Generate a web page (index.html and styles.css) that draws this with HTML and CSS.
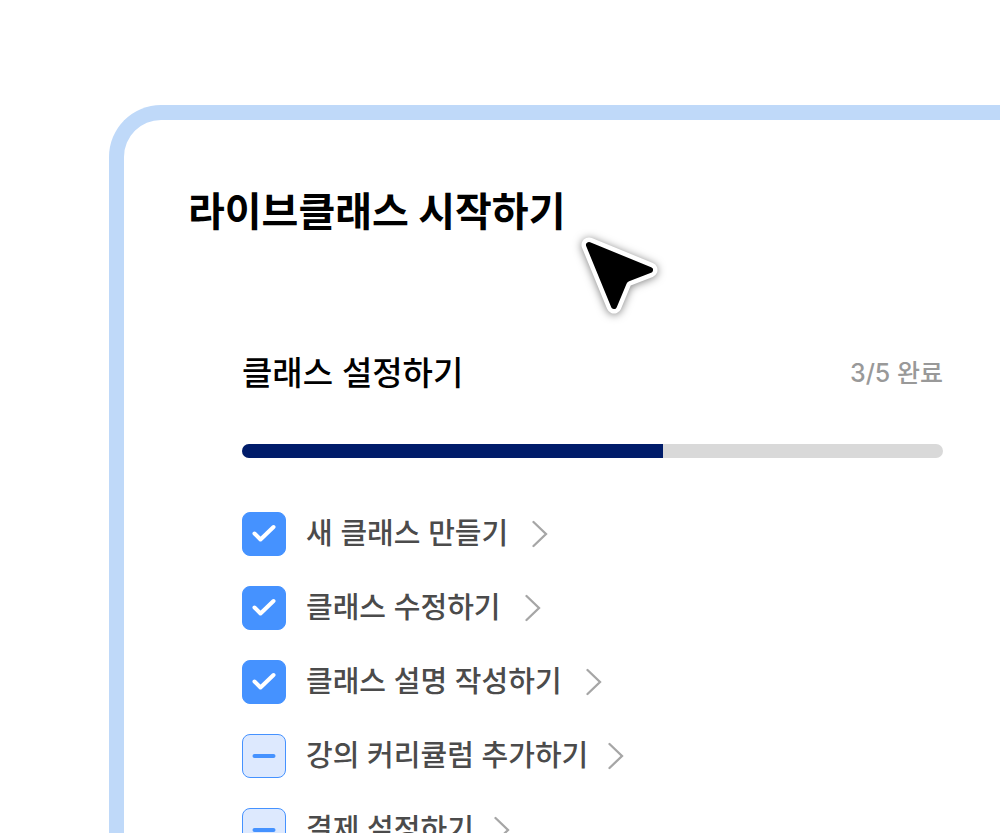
FILE: index.html
```html
<!DOCTYPE html>
<html lang="ko">
<head>
<meta charset="utf-8">
<meta name="viewport" content="width=device-width, initial-scale=1">
<title>라이브클래스 시작하기</title>
<link rel="stylesheet" href="styles.css">
</head>
<body>
<main class="panel">
  <header class="panel-head">
    <h1 class="title">라이브클래스 시작하기</h1>
    <svg class="cursor" viewBox="0 0 110 110" aria-hidden="true">
      <path class="cursor-edge" d="M24 25 L85 50 L63 58.500 Q60 59.700 58.800 62.500 L49 86 Z"/>
      <path class="cursor-body" d="M24 25 L85 50 L63 58.500 Q60 59.700 58.800 62.500 L49 86 Z"/>
    </svg>
  </header>
  <section class="setup">
    <div class="setup-head">
      <h2 class="subtitle" id="setup-title">클래스 설정하기</h2>
      <p class="count">3/5 완료</p>
    </div>
    <div class="track" role="progressbar" aria-labelledby="setup-title" aria-valuemin="0" aria-valuemax="5" aria-valuenow="3"><div class="fill" style="width:60%"></div></div>
    <ul class="steps">
      <li class="step">
        <span class="box"><input class="check" type="checkbox" id="s1" checked><svg class="mark done" viewBox="0 0 44 44" aria-hidden="true"><path d="M12.500 21.500 L18.500 27.500 L31.500 15"/></svg></span>
        <label class="name" for="s1">새 클래스 만들기</label>
        <a class="go" href="#s1" aria-label="새 클래스 만들기"><svg class="chevron" viewBox="0 0 16 28" aria-hidden="true"><path d="M1.500 2 L14 14 L1.500 26"/></svg></a>
      </li>
      <li class="step">
        <span class="box"><input class="check" type="checkbox" id="s2" checked><svg class="mark done" viewBox="0 0 44 44" aria-hidden="true"><path d="M12.500 21.500 L18.500 27.500 L31.500 15"/></svg></span>
        <label class="name" for="s2">클래스 수정하기</label>
        <a class="go" href="#s2" aria-label="클래스 수정하기"><svg class="chevron" viewBox="0 0 16 28" aria-hidden="true"><path d="M1.500 2 L14 14 L1.500 26"/></svg></a>
      </li>
      <li class="step">
        <span class="box"><input class="check" type="checkbox" id="s3" checked><svg class="mark done" viewBox="0 0 44 44" aria-hidden="true"><path d="M12.500 21.500 L18.500 27.500 L31.500 15"/></svg></span>
        <label class="name" for="s3">클래스 설명 작성하기</label>
        <a class="go" href="#s3" aria-label="클래스 설명 작성하기"><svg class="chevron" viewBox="0 0 16 28" aria-hidden="true"><path d="M1.500 2 L14 14 L1.500 26"/></svg></a>
      </li>
      <li class="step pending">
        <span class="box"><input class="check" type="checkbox" id="s4"><svg class="mark" viewBox="0 0 44 44" aria-hidden="true"><path d="M12.500 22 H31.500"/></svg></span>
        <label class="name" for="s4">강의 커리큘럼 추가하기</label>
        <a class="go" href="#s4" aria-label="강의 커리큘럼 추가하기"><svg class="chevron" viewBox="0 0 16 28" aria-hidden="true"><path d="M1.500 2 L14 14 L1.500 26"/></svg></a>
      </li>
      <li class="step pending">
        <span class="box"><input class="check" type="checkbox" id="s5"><svg class="mark" viewBox="0 0 44 44" aria-hidden="true"><path d="M12.500 22 H31.500"/></svg></span>
        <label class="name" for="s5">결제 설정하기</label>
        <a class="go" href="#s5" aria-label="결제 설정하기"><svg class="chevron" viewBox="0 0 16 28" aria-hidden="true"><path d="M1.500 2 L14 14 L1.500 26"/></svg></a>
      </li>
    </ul>
  </section>
</main>
</body>
</html>
```
FILE: styles.css
```css
* { box-sizing: border-box; }
html { scrollbar-width: none; }
body {
  margin: 0;
  padding: 105px 0 0 109px;
  background: #fff;
  color: #000;
  font-family: Inter, "Noto Sans CJK KR", sans-serif;
}
h1, h2, p, ul { margin: 0; padding: 0; }
.panel {
  border: 15px solid #bfd9f9;
  border-right: 0;
  border-bottom: 0;
  border-radius: 52px 0 0 0;
  padding: 62px 57px 60px 64px;
}
.panel-head { position: relative; display: flex; }
.title { font-size: 40px; line-height: 60px; font-weight: 700; white-space: nowrap; }
.cursor {
  position: absolute;
  left: 377px;
  top: 38px;
  width: 110px;
  height: 110px;
  filter: drop-shadow(0 1px 4px rgba(0, 0, 0, 0.5));
}
.cursor-edge { fill: #fff; stroke: #fff; stroke-width: 15; stroke-linejoin: round; }
.cursor-body { fill: #000; stroke: #000; stroke-width: 6; stroke-linejoin: round; }
.setup { margin-top: 107px; padding-left: 54px; }
.setup-head { display: flex; justify-content: space-between; align-items: center; }
.subtitle { font-size: 33px; line-height: 48px; font-weight: 500; }
.count { font-size: 25px; line-height: 40px; font-weight: 500; color: #999; }
.track { margin-top: 47px; height: 14px; border-radius: 7px; background: #d9d9d9; overflow: hidden; }
.fill { height: 100%; background: #001c6a; }
.steps { list-style: none; display: grid; gap: 30px; margin-top: 54px; }
.step { display: flex; align-items: center; height: 44px; }
.box { display: grid; width: 44px; height: 44px; flex: none; }
.check {
  appearance: none;
  grid-area: 1 / 1;
  width: 44px;
  height: 44px;
  margin: 0;
  border: 1px solid #4592ff;
  border-radius: 8px;
  background: #dde9fe;
}
.check:checked { background: #4592ff; }
.mark {
  grid-area: 1 / 1;
  pointer-events: none;
  fill: none;
  stroke: #4592ff;
  stroke-width: 4;
  stroke-linecap: round;
  stroke-linejoin: round;
}
.done { stroke: #fff; }
.name { margin-left: 20px; font-size: 29px; line-height: 44px; font-weight: 500; color: #4b4b4b; white-space: nowrap; }
.go { display: flex; margin-left: 24px; }
.pending .go { margin-left: 20px; }
.chevron { width: 16px; height: 28px; fill: none; stroke: #a6a6a6; stroke-width: 2.300; stroke-linecap: round; }
```
